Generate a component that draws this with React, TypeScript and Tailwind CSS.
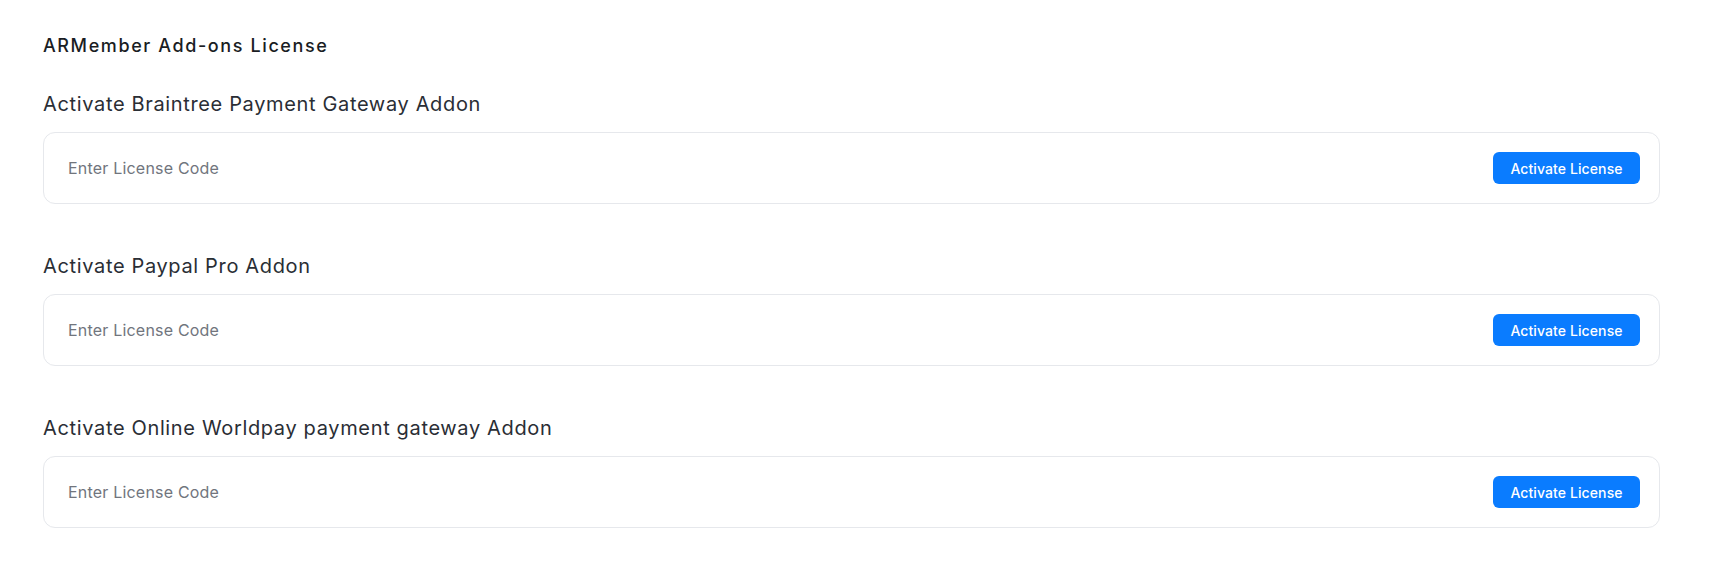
import React from 'react';

interface Addon {
  id: string;
  title: string;
}

const addons: Addon[] = [
  { id: 'braintree', title: 'Activate Braintree Payment Gateway Addon' },
  { id: 'paypal_pro', title: 'Activate Paypal Pro Addon' },
  { id: 'worldpay', title: 'Activate Online Worldpay payment gateway Addon' },
];

const LicenseRow: React.FC<{ addon: Addon }> = ({ addon }) => {
  const [code, setCode] = React.useState('');

  return (
    <div className="mb-[48px]">
      <h3 className="text-[20px] leading-[28px] font-normal tracking-[0.65px] text-[#2a2e35] mb-[14px]">{addon.title}</h3>
      <div className="h-[72px] flex items-center justify-between bg-white border border-[#e6e8ec] rounded-[12px] pl-[24px] pr-[19px]">
        <input
          type="text"
          value={code}
          onChange={(e) => setCode(e.target.value)}
          placeholder="Enter License Code"
          className="flex-1 bg-transparent outline-none text-[16px] tracking-[0.2px] text-[#374151] placeholder:text-[#71757d]"
        />
        <button className="h-[32px] w-[147px] rounded-[6px] bg-[#0a7cff] text-white text-[14px] font-medium tracking-[0.1px] hover:bg-[#0068e0]">
          Activate License
        </button>
      </div>
    </div>
  );
};

const App: React.FC = () => {
  return (
    <div className="min-h-[566px] bg-white pl-[43px] pt-[34px] pr-[56px]" style={{ fontFamily: 'Inter, "Open Sans", sans-serif' }}>
      <h2 className="text-[18px] leading-[24px] font-medium tracking-[1.6px] text-[#1a1d23] mb-[32px]">ARMember Add-ons License</h2>
      {addons.map((a) => (
        <LicenseRow key={a.id} addon={a} />
      ))}
    </div>
  );
};

export default App;
